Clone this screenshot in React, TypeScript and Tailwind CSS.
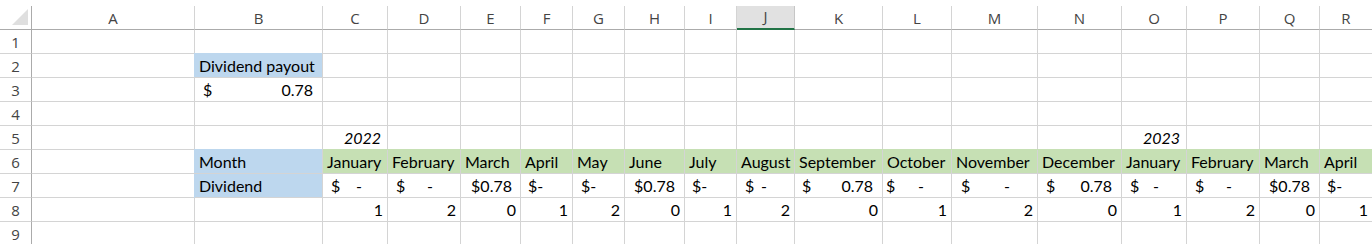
import React from "react";

const LETTERS = ["A","B","C","D","E","F","G","H","I","J","K","L","M","N","O","P","Q","R"];
const MONTHS = ["January","February","March","April","May","June","July","August","September","October","November","December","January","February","March","April"];

const cellBase = "h-[24px] border-r border-b border-[#d4d4d4] flex items-end pb-[3px] overflow-hidden whitespace-nowrap";

function RowHead({ n }: { n: number }) {
  return (
    <div className="h-[24px] border-r border-b border-r-[#ababab] border-b-[#d4d4d4] flex items-end justify-center pb-[3px] text-[15px] leading-none text-[#444] font-['Open_Sans',sans-serif]">
      {n}
    </div>
  );
}

function Empty() {
  return <div className={cellBase} />;
}

function Acct({ v, cls }: { v: string; cls: string }) {
  return (
    <div className={`${cellBase} justify-between ${cls}`}>
      <span>$</span>
      <span>{v}</span>
    </div>
  );
}

function Right({ v, cls }: { v: string; cls: string }) {
  return <div className={`${cellBase} justify-end ${cls}`}>{v}</div>;
}

function Left({ v, cls }: { v: string; cls: string }) {
  return <div className={`${cellBase} justify-start ${cls}`}>{v}</div>;
}

export default function App() {
  return (
    <div className="w-[1372px] h-[244px] overflow-hidden bg-white pt-[6px] font-['Lato',sans-serif] text-[16px] leading-none text-black">
      <div className="grid grid-cols-[32px_163px_128px_65px_73px_60px_52px_52px_60px_52px_58px_88px_69px_86px_84px_65px_73px_60px_53px]">
        {/* header row */}
        <div className="h-[24px] border-r border-b border-[#ababab] relative">
          <div className="absolute left-[12px] top-[3px] w-0 h-0 border-l-[16px] border-l-transparent border-b-[16px] border-b-[#dfdfdf]" />
        </div>
        {LETTERS.map((l) =>
          l === "J" ? (
            <div key={l} className="h-[24px] border-r border-r-[#c6c6c6] border-b-2 border-b-[#217346] bg-[#e1e1e1] flex items-center justify-center text-[15px] leading-none text-[#444] font-['Open_Sans',sans-serif] pb-[1px]">
              {l}
            </div>
          ) : (
            <div key={l} className="h-[24px] border-r border-r-[#d4d4d4] border-b border-b-[#ababab] flex items-center justify-center text-[15px] leading-none text-[#444] font-['Open_Sans',sans-serif] pt-[1px]">
              {l}
            </div>
          )
        )}

        {/* row 1 */}
        <RowHead n={1} />
        {LETTERS.map((l) => <Empty key={"r1" + l} />)}

        {/* row 2 */}
        <RowHead n={2} />
        <Empty />
        <div className={`${cellBase} bg-[#bdd7ee] border-[#bdd7ee] shadow-[-1px_-1px_0_0_#bdd7ee] pl-[4px]`}>Dividend payout</div>
        {LETTERS.slice(2).map((l) => <Empty key={"r2" + l} />)}

        {/* row 3 */}
        <RowHead n={3} />
        <Empty />
        <Acct v="0.78" cls="pl-[8px] pr-[9px]" />
        {LETTERS.slice(2).map((l) => <Empty key={"r3" + l} />)}

        {/* row 4 */}
        <RowHead n={4} />
        {LETTERS.map((l) => <Empty key={"r4" + l} />)}

        {/* row 5 */}
        <RowHead n={5} />
        <Empty />
        <Empty />
        <div className={`${cellBase} justify-end pr-[6px] italic`}>2022</div>
        {LETTERS.slice(3, 14).map((l) => <Empty key={"r5" + l} />)}
        <div className={`${cellBase} justify-end pr-[6px] italic`}>2023</div>
        {LETTERS.slice(15).map((l) => <Empty key={"r5b" + l} />)}

        {/* row 6 */}
        <RowHead n={6} />
        <Empty />
        <div className={`${cellBase} bg-[#bdd7ee] border-[#bdd7ee] shadow-[-1px_-1px_0_0_#bdd7ee] pl-[4px]`}>Month</div>
        {MONTHS.map((m, i) => (
          <div key={"m" + i} className={`${cellBase} bg-[#c6e0b4] border-[#c6e0b4] shadow-[0_-1px_0_0_#c6e0b4] pl-[4px]`}>
            {m}
          </div>
        ))}

        {/* row 7 */}
        <RowHead n={7} />
        <Empty />
        <div className={`${cellBase} bg-[#bdd7ee] border-[#bdd7ee] shadow-[-1px_0_0_0_#bdd7ee] pl-[4px]`}>Dividend</div>
        <Acct v="-" cls="pl-[8px] pr-[25px]" />
        <Acct v="-" cls="pl-[8px] pr-[27px]" />
        <Right v="$0.78" cls="pr-[8px]" />
        <Left v="$-" cls="pl-[7px]" />
        <Left v="$-" cls="pl-[8px]" />
        <Right v="$0.78" cls="pr-[9px]" />
        <Left v="$-" cls="pl-[7px]" />
        <Acct v="-" cls="pl-[8px] pr-[27px]" />
        <Acct v="0.78" cls="pl-[7px] pr-[9px]" />
        <Acct v="-" cls="pl-[3px] pr-[27px]" />
        <Acct v="-" cls="pl-[9px] pr-[27px]" />
        <Acct v="0.78" cls="pl-[8px] pr-[9px]" />
        <Acct v="-" cls="pl-[8px] pr-[27px]" />
        <Acct v="-" cls="pl-[8px] pr-[27px]" />
        <Right v="$0.78" cls="pr-[9px]" />
        <Left v="$-" cls="pl-[7px]" />

        {/* row 8 */}
        <RowHead n={8} />
        <Empty />
        <Empty />
        {[1, 2, 0, 1, 2, 0, 1, 2, 0, 1, 2, 0, 1, 2, 0, 1].map((n, i) => (
          <Right key={"n" + i} v={String(n)} cls="pr-[4px]" />
        ))}

        {/* row 9 */}
        <RowHead n={9} />
        {LETTERS.map((l) => <Empty key={"r9" + l} />)}
      </div>
    </div>
  );
}
